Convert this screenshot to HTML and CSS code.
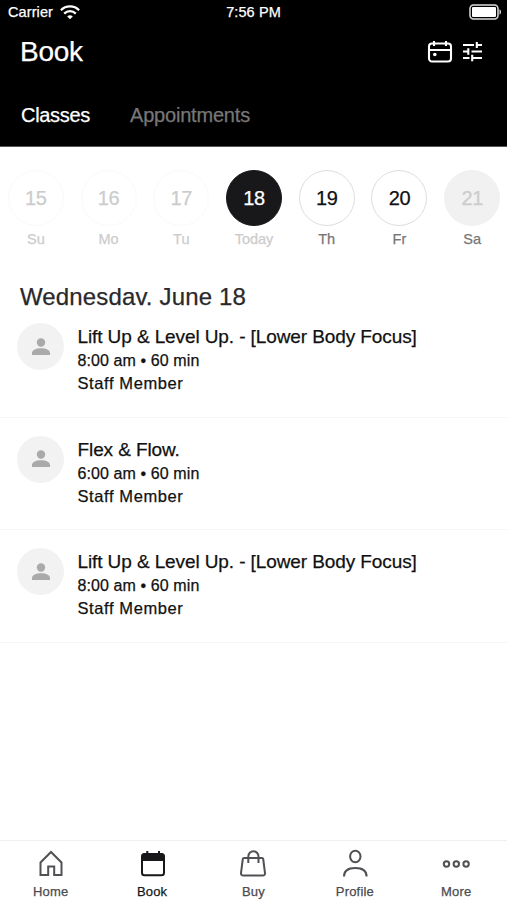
FILE: index.html
```html
<!DOCTYPE html>
<html lang="en">
<head>
<meta charset="utf-8">
<title>Book</title>
<link rel="stylesheet" href="styles.css">
</head>
<body>
<header class="top">
  <div class="status">
    <div class="carrier"><span>Carrier</span>
      <svg width="20" height="15" viewBox="0 0 20 15" fill="none" stroke="#fff" stroke-width="2.3"><path d="M.9 5.2a12.8 12.8 0 0 1 18.2 0M4.2 8.6a8.2 8.2 0 0 1 11.6 0"/><path d="M10 14.3 7.2 11.6a4 4 0 0 1 5.6 0z" fill="#fff" stroke="none"/></svg>
    </div>
    <span class="clock">7:56 PM</span>
    <svg class="battery" width="33" height="16" viewBox="0 0 33 16"><rect x="1" y="1" width="28" height="14" rx="3.5" fill="none" stroke="#ddd" stroke-width="1.5"/><rect x="3" y="3" width="24" height="10" rx="1" fill="#fff"/><path d="M30.5 5.3c2 .8 2 4.6 0 5.4z" fill="#ddd"/></svg>
  </div>
  <div class="titlebar">
    <h1>Book</h1>
    <svg width="26" height="24" viewBox="0 0 26 24" fill="none" stroke="#fff" stroke-width="2.1"><rect x="2" y="3.500" width="22" height="18" rx="3"/><path d="M2 10h22M7 1v5M19 1v5" /><circle cx="7.8" cy="14.500" r="1.8" fill="#fff" stroke="none"/></svg>
    <svg class="filter" width="22" height="24" viewBox="0 0 22 24" fill="none" stroke="#fff" stroke-width="2.1"><path d="M1 5h11M15 5h5M14.800 2v6M1 11.500h6M6.300 8.300v6.400M9.500 11.500H20M1 18h6.500M10.200 14.800v6.400M10.200 18H20"/></svg>
  </div>
  <nav class="tabs"><span>Classes</span><span class="off">Appointments</span></nav>
</header>
<main>
  <div class="week">
    <div class="day past"><b>15</b><span>Su</span></div>
    <div class="day past"><b>16</b><span>Mo</span></div>
    <div class="day past"><b>17</b><span>Tu</span></div>
    <div class="day today"><b>18</b><span>Today</span></div>
    <div class="day"><b>19</b><span>Th</span></div>
    <div class="day"><b>20</b><span>Fr</span></div>
    <div class="day closed"><b>21</b><span>Sa</span></div>
  </div>
  <h2>Wednesdav. June 18</h2>
  <article>
    <div class="avatar"><svg width="18" height="18" viewBox="0 0 18 18"><circle cx="9" cy="4.500" r="4.200"/><path d="M0 17v-2c0-3 4-4.700 9-4.700s9 1.700 9 4.700v2z"/></svg></div>
    <div><h3>Lift Up &amp; Level Up. - [Lower Body Focus]</h3><p class="time">8:00 am • 60 min</p><p class="staff">Staff Member</p></div>
  </article>
  <article>
    <div class="avatar"><svg width="18" height="18" viewBox="0 0 18 18"><circle cx="9" cy="4.500" r="4.200"/><path d="M0 17v-2c0-3 4-4.700 9-4.700s9 1.700 9 4.700v2z"/></svg></div>
    <div><h3>Flex &amp; Flow.</h3><p class="time">6:00 am • 60 min</p><p class="staff">Staff Member</p></div>
  </article>
  <article>
    <div class="avatar"><svg width="18" height="18" viewBox="0 0 18 18"><circle cx="9" cy="4.500" r="4.200"/><path d="M0 17v-2c0-3 4-4.700 9-4.700s9 1.700 9 4.700v2z"/></svg></div>
    <div><h3>Lift Up &amp; Level Up. - [Lower Body Focus]</h3><p class="time">8:00 am • 60 min</p><p class="staff">Staff Member</p></div>
  </article>
</main>
<footer>
  <div class="item"><svg width="30" height="30" viewBox="0 0 30 30"><path d="M4.500 13.500 15 3l10.500 10.500V26h-7.300v-8.500h-6V26H4.500z"/></svg><span>Home</span></div>
  <div class="item on"><svg width="30" height="30" viewBox="0 0 30 30"><rect x="5" y="5" width="22" height="21.300" rx="2.500"/><path d="M4.500 12V7q0-2.500 2.500-2.500h18Q27.500 4.500 27.500 7v5z" fill="#18181b" stroke="none"/><path d="M10.300 2v5M22 2v5"/></svg><span>Book</span></div>
  <div class="item"><svg width="30" height="30" viewBox="0 0 30 30"><path d="M6 9h18q1 0 1.200 1l1.800 14q.2 2.500-2.300 2.500H5.300Q2.800 26.500 3 24L4.800 10Q5 9 6 9zM10.300 14V7.500a5.100 5.300 0 0 1 10.200 0V14"/></svg><span>Buy</span></div>
  <div class="item"><svg width="30" height="30" viewBox="0 0 30 30"><ellipse cx="15.300" cy="7.500" rx="5.200" ry="5.800"/><path d="M4 27.500c0-5.500 4-8.500 11.300-8.500s11.300 3 11.300 8.500"/></svg><span>Profile</span></div>
  <div class="item"><svg width="30" height="30" viewBox="0 0 30 30"><circle cx="5.500" cy="15" r="2.700"/><circle cx="15.300" cy="15" r="2.700"/><circle cx="25.100" cy="15" r="2.700"/></svg><span>More</span></div>
</footer>
</body>
</html>
```
FILE: styles.css
```css
* { box-sizing: border-box; margin: 0; padding: 0; }
body {
  height: 900px;
  display: flex;
  flex-direction: column;
  overflow: hidden;
  background: #fff;
  color: #111;
  font-family: "Liberation Sans", Arial, sans-serif;
  -webkit-text-stroke: 0.25px;
}
h1, h2, h3, b { font-weight: 400; }
span, h1, h2, h3, p { white-space: nowrap; }
svg { display: block; flex: none; }

.top { height: 147px; flex: none; background: #000; color: #fff; border-bottom: 1px solid #555; }
.status {
  height: 24px;
  display: grid;
  grid-template-columns: 1fr auto 1fr;
  align-items: center;
  padding: 0 5px 0 8px;
  font-size: 14.5px;
}
.carrier { display: flex; align-items: center; gap: 7px; letter-spacing: 0.1px; }
.clock { margin-right: 3px; font-size: 14.5px; letter-spacing: 0.1px; }
.battery { justify-self: end; }
.titlebar { height: 56px; display: flex; align-items: center; padding: 0 23px 0 20px; }
h1 { flex: 1; font-size: 28px; letter-spacing: -0.3px; }
.filter { margin-left: 9px; }
.tabs { display: flex; gap: 40px; padding: 23px 0 0 21px; font-size: 20px; line-height: 24px; letter-spacing: -0.3px; }
.tabs .off { color: #777; letter-spacing: -0.2px; }

main { flex: 1; }
.week { display: grid; grid-template-columns: repeat(7, 1fr); margin: 0 -1.5px 0 -0.5px; padding-top: 23px; }
.day { display: flex; flex-direction: column; align-items: center; color: #777; font-size: 14.5px; line-height: 18px; }
.day b {
  width: 56px;
  height: 56px;
  margin-bottom: 4px;
  border: 1px solid #ddd;
  border-radius: 50%;
  color: #111;
  font-size: 20px;
  line-height: 54px;
  text-align: center;
  letter-spacing: -0.4px;
}
.past { color: #ccc; }
.past b { color: #ccc; border-color: #fafafa; }
.today { color: #ccc; }
.today b { background: #18181a; border-color: #18181a; color: #fff; }
.closed b { background: #f1f1f1; border-color: #f1f1f1; color: #ccc; }

h2 {
  margin: 35px 0 -6px 20px;
  color: #29292b;
  font-size: 24px;
  line-height: 28px;
  letter-spacing: 0.15px;
}
article {
  height: 112.5px;
  display: flex;
  gap: 13.5px;
  padding: 18px 17px 0;
  border-bottom: 1px solid #f5f5f5;
}
.avatar {
  width: 47px;
  height: 47px;
  flex: none;
  display: flex;
  align-items: center;
  justify-content: center;
  border-radius: 50%;
  background: #f2f2f2;
}
.avatar svg { fill: #aaa; }
h3 { padding-top: 2px; font-size: 19px; line-height: 24px; letter-spacing: -0.1px; }
.time { font-size: 16px; line-height: 23px; letter-spacing: 0.1px; }
.staff { font-size: 16.5px; line-height: 23px; letter-spacing: 0.6px; }

footer { height: 60px; flex: none; display: grid; grid-template-columns: repeat(5, 1fr); border-top: 1px solid #f0f0f0; }
.item { display: flex; flex-direction: column; align-items: center; padding-top: 8px; color: #4b4b50; }
.item svg { fill: none; stroke: #505055; stroke-width: 2; }
.item span { margin-top: 5px; font-size: 13px; line-height: 16px; letter-spacing: 0.2px; }
.on { color: #18181b; }
.on svg { stroke: #18181b; }
```
